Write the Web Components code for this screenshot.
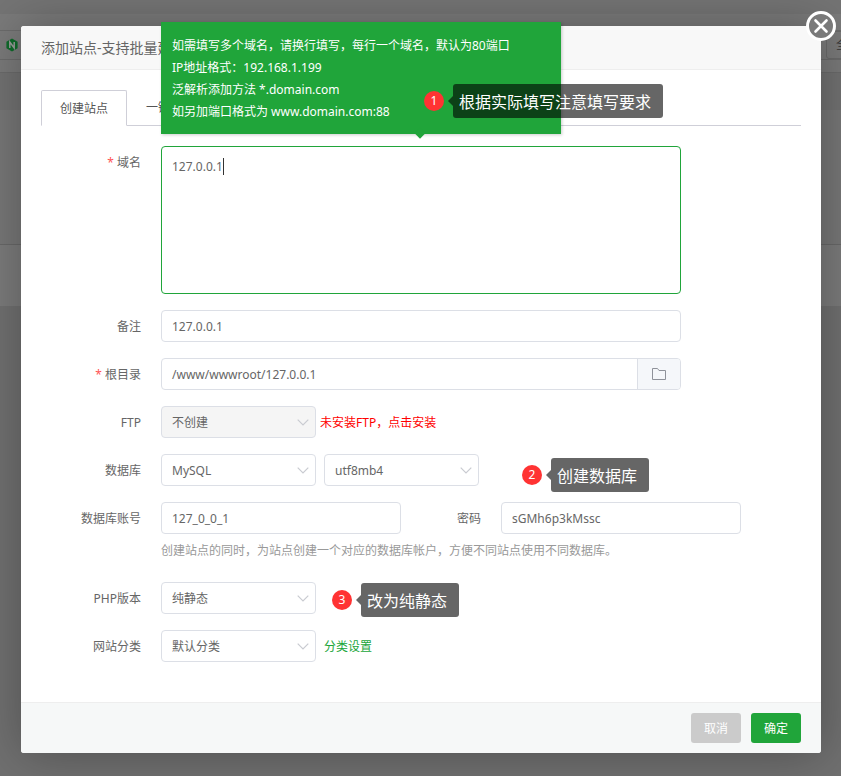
<!DOCTYPE html>
<html lang="zh"><head><meta charset="utf-8"><title>添加站点</title>
<style>
html,body{margin:0;padding:0;height:776px;overflow:hidden;background:#707070}
body{font:12px/1.4 "Noto Sans","Noto Sans CJK SC",sans-serif;color:#666;position:relative}
</style></head><body>
<bt-backdrop></bt-backdrop>
<bt-dialog title-text="添加站点-支持批量建站">
  <bt-tabs slot="body"></bt-tabs>
  <bt-form slot="body">
    <bt-row label="域名" required tall><bt-field multi green value="127.0.0.1" caret w="520"></bt-field></bt-row>
    <bt-row label="备注"><bt-field value="127.0.0.1" w="520"></bt-field></bt-row>
    <bt-row label="根目录" required><bt-field value="/www/wwwroot/127.0.0.1" w="520" folder></bt-field></bt-row>
    <bt-row label="FTP"><bt-select value="不创建" disabled></bt-select><bt-note color="#f00" gap="-4">未安装FTP，点击安装</bt-note></bt-row>
    <bt-row label="数据库"><bt-select value="MySQL"></bt-select><bt-select value="utf8mb4"></bt-select></bt-row>
    <bt-row label="数据库账号"><bt-field value="127_0_0_1" w="240"></bt-field><bt-note align w="72" color="#666" end>密码</bt-note><bt-field value="sGMh6p3kMssc" w="240" gap="12"></bt-field><bt-help>创建站点的同时，为站点创建一个对应的数据库帐户，方便不同站点使用不同数据库。</bt-help></bt-row>
    <bt-row label="PHP版本"><bt-select value="纯静态"></bt-select></bt-row>
    <bt-row label="网站分类"><bt-select value="默认分类"></bt-select><bt-note color="#20a53a">分类设置</bt-note></bt-row>
  </bt-form>
  <bt-tip slot="over"></bt-tip>
  <bt-callout slot="over" n="1" x="403" y="58" w="210">根据实际填写注意填写要求</bt-callout>
  <bt-callout slot="over" n="2" x="501" y="432" w="98">创建数据库</bt-callout>
  <bt-callout slot="over" n="3" x="311" y="557" w="98">改为纯静态</bt-callout>
</bt-dialog>
<script>
function el(name, css, html, init){
  customElements.define(name, class extends HTMLElement{
    connectedCallback(){
      if(this.shadowRoot) return;
      const r=this.attachShadow({mode:'open'});
      r.innerHTML='<style>'+css+'</style>'+(typeof html==='function'?html(this):html);
      if(init) init(this,r);
    }
  });
}
const a=(e,n,d='')=>e.getAttribute(n)??d;

el('bt-backdrop',`
:host{display:flex;flex-direction:column;height:776px;background:#707070;overflow:hidden}
.s{flex:none;box-sizing:border-box}
.a{height:14px;background:#747474}
.b{height:16px;background:#7a7a7a}
.c{background:#7a7a7a;border-top:1px solid #6b6b6b;border-bottom:1px solid #6b6b6b;display:flex;align-items:center;justify-content:space-between;height:30px}
.d{height:13px;background:#7a7a7a;border-bottom:1px solid #6b6b6b}
.e{height:36px;background:#727272}
.f{height:136px;background:#777;border-top:1px solid #727272;border-bottom:1px solid #686868}
.g{height:61px;background:#7b7b7b}
svg{margin-left:5px;flex:none}
.btn{flex:none;margin-right:-30px;width:45px;height:28px;box-sizing:border-box;border:1px solid #6a6a6a;border-radius:3px;padding-left:9px;line-height:26px;color:#333;font-size:12px}
`,`<div class="s a"></div><div class="s b"></div>
<div class="s c"><svg width="14" height="14" viewBox="0 0 14 14"><path d="M7 .5 12.6 3.7V10.300L7 13.500 1.400 10.300V3.700Z" fill="#0f6b2b"/><path d="M4.800 10V4L9.200 10V4" fill="none" stroke="#9a9a9a" stroke-width="1.500"/></svg><div class="btn">全部</div></div>
<div class="s d"></div><div class="s e"></div><div class="s f"></div><div class="s g"></div>`);

el('bt-dialog',`
:host{position:absolute;left:21px;top:26px;width:800px;height:727px;display:flex;flex-direction:column;background:#fff;border-radius:3px;box-shadow:1px 1px 50px rgba(0,0,0,.3)}
header{flex:none;box-sizing:border-box;height:44px;background:#f8f8f8;border-bottom:1px solid #eee;padding:0 20px;line-height:44px;font-size:14px;color:#666;border-radius:3px 3px 0 0}
main{flex:1;padding:20px 20px 0;min-height:0}
footer{flex:none;box-sizing:border-box;height:51px;background:#f6f8f8;border-top:1px solid #eee;display:flex;justify-content:flex-end;gap:10px;padding:10px 20px;border-radius:0 0 3px 3px}
button{width:50px;height:30px;border:0;border-radius:3px;color:#fff;font:12px "Noto Sans","Noto Sans CJK SC",sans-serif;padding:0}
.no{background:#cbcbcb}.ok{background:#20a53a}
.close{position:absolute;right:-15px;top:-15px;width:30px;height:30px}
`,e=>`<header>${a(e,'title-text')}</header><main><slot name="body"></slot></main>
<footer><button class="no">取消</button><button class="ok">确定</button></footer>
<slot name="over"></slot>
<svg class="close" viewBox="0 0 30 30"><circle cx="15" cy="15" r="13.500" fill="#7a7a7a" stroke="#fff" stroke-width="3"/><path d="M9.500 9.500 20.500 20.500M20.500 9.500 9.500 20.500" stroke="#fff" stroke-width="2.600" stroke-linecap="round"/></svg>`);

el('bt-tabs',`
:host{display:flex;height:36px;box-sizing:border-box;border-bottom:1px solid #cfcfd8}
div{box-sizing:border-box;height:36px;font-size:12px;color:#555;white-space:nowrap}
.on{width:86px;border:1px solid #cfcfd8;border-bottom:1px solid #fff;border-radius:2px 2px 0 0;text-align:center;line-height:36px}
.off{padding-left:19px;line-height:36px}
`,`<div class="on">创建站点</div><div class="off">一键部署</div>`);

el('bt-form',`:host{display:flex;flex-direction:column;gap:16px;margin-top:20px}`,`<slot></slot>`);

el('bt-row',`
:host{display:grid;grid-template-columns:100px 1fr;column-gap:20px}
label{display:block;box-sizing:border-box;text-align:right;height:32px;line-height:34px;color:#666;font-size:12px;white-space:nowrap}
i{font-style:normal;color:#f55;margin-right:3px}
div{display:flex;flex-wrap:wrap;gap:8px;align-items:flex-start}
`,e=>`<label>${e.hasAttribute('required')?'<i>*</i>':''}${a(e,'label')}</label><div><slot></slot></div>`);

el('bt-field',`
:host{display:flex;box-sizing:border-box;height:32px;border:1px solid #dcdfe6;border-radius:4px;background:#fff;color:#666;font-size:12px;line-height:32px;overflow:hidden;flex:none}
:host([multi]){height:148px;line-height:18px}
:host([green]){border-color:#20a53a}
.t{flex:1;padding:0 10px;white-space:nowrap;height:30px}
:host([multi]) .t{padding:11px 10px}
.c{display:inline-block;width:1px;height:17px;background:#333;vertical-align:-4px}
.f{flex:none;box-sizing:border-box;width:43px;background:#f5f7fa;border-left:1px solid #dcdfe6;display:flex;align-items:center;justify-content:center}
`,e=>`<div class="t">${a(e,'value')}${e.hasAttribute('caret')?'<span class="c"></span>':''}</div>${e.hasAttribute('folder')?'<div class="f"><svg width="16" height="14" viewBox="0 0 16 14"><path d="M1.500 1.500H6.500L8 3.500H14.500V12.500H1.500Z" fill="none" stroke="#8f929a" stroke-width="1"/></svg></div>':''}`,
(e)=>{e.style.width=a(e,'w')+'px'; if(a(e,'gap')) e.style.marginLeft=a(e,'gap')+'px';});

el('bt-select',`
:host{display:flex;align-items:center;justify-content:space-between;box-sizing:border-box;width:155px;height:32px;flex:none;border:1px solid #dcdfe6;border-radius:4px;background:#fff;color:#666;font-size:12px;padding:0 10px;line-height:32px}
:host([disabled]){background:#f5f5f5}
span{height:30px}
svg{flex:none;margin:1px -4px 0 0}
`,e=>`<span>${a(e,'value')}</span><svg width="12" height="7" viewBox="0 0 12 7"><path d="M.7.7 6 6 11.300.7" fill="none" stroke="#c9cbd1" stroke-width="1.200"/></svg>`);

el('bt-note',`:host{display:block;height:32px;line-height:34px;font-size:12px;white-space:nowrap;flex:none}:host([end]){text-align:right}`,`<slot></slot>`,
e=>{e.style.color=a(e,'color'); if(a(e,'w')) e.style.width=a(e,'w')+'px'; if(a(e,'gap')) e.style.marginLeft=a(e,'gap')+'px';});

el('bt-help',`:host{display:block;flex:0 0 100%;box-sizing:border-box;height:16px;line-height:18px;color:#999;font-size:12px;margin-bottom:8px}`,`<slot></slot>`);

el('bt-tip',`
:host{position:absolute;left:140px;top:-4px;width:400px;height:112px;box-sizing:border-box;background:#20a53a;color:#fff;padding:13px 11px;font-size:12px;line-height:22px;box-shadow:1px 1px 3px rgba(0,0,0,.2)}
p{margin:0;white-space:nowrap}
u{position:absolute;left:255px;top:107px;width:8px;height:8px;background:#20a53a;transform:rotate(45deg);text-decoration:none}
`,`<p>如需填写多个域名，请换行填写，每行一个域名，默认为80端口</p><p>IP地址格式：192.168.1.199</p><p>泛解析添加方法 *.domain.com</p><p>如另加端口格式为 www.domain.com:88</p><u></u>`);

el('bt-callout',`
:host{position:absolute;display:flex;align-items:center;height:34px;color:#fff}
b{flex:none;width:20px;height:20px;border-radius:50%;background:#ff3333;font:400 12px/20px "Noto Sans",sans-serif;text-align:center;color:#fff}
u{flex:none;width:0;height:0;margin-left:4px;border:5px solid transparent;border-left:0;border-right-color:rgba(0,0,0,.6)}
div{box-sizing:border-box;height:34px;background:rgba(0,0,0,.6);border-radius:3px;font-size:16px;line-height:36px;padding-left:6px;white-space:nowrap}
`,e=>`<b>${a(e,'n')}</b><u></u><div style="width:${a(e,'w')}px"><slot></slot></div>`,
e=>{e.style.left=a(e,'x')+'px';e.style.top=a(e,'y')+'px';});
</script>
</body></html>
